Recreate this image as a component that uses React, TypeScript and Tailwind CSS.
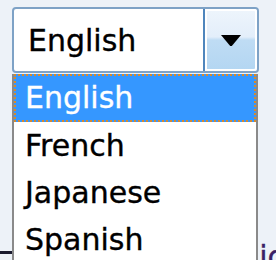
const options = ["English", "French", "Japanese", "Spanish"];

const ArrowIcon = () => (
  <svg width="22" height="13" viewBox="0 0 22 13">
    <path d="M1 1 H21 L11.8 12 H10.2 Z" fill="#000" />
  </svg>
);

export default function App() {
  return (
    <div
      className="relative flex h-[260px] w-[276px] flex-col overflow-hidden bg-[#edf2f8] [-webkit-text-stroke:0.35px_currentColor]"
      style={{ fontFamily: '"DejaVu Sans", Verdana, sans-serif' }}
    >
      <div className="pl-[12px] pt-[7px]">
        <div className="flex h-[66px] w-[247px] rounded-[4px] border-2 border-[#7ea2c6] bg-white">
          <div className="flex flex-1 items-center pl-[14px] text-[30px] text-black">
            English
          </div>
          <div className="flex w-[54px] items-center justify-center rounded-r-[3px] border-l-2 border-[#4f86bd] bg-[linear-gradient(to_bottom,#eef5fc_0%,#e3eefa_45%,#bfdcf4_50%,#b3d6f2_100%)] shadow-[inset_0_0_0_2px_#fff]">
            <ArrowIcon />
          </div>
        </div>
      </div>

      {/* page content under the open list */}
      <div className="flex flex-1 items-end justify-between">
        <div className="mb-[6px] h-[3px] w-[12px] bg-[#1a1a2e]" />
        <div className="mb-[-12px] mr-[-8px] text-[30px] leading-[30px] text-[#3b1f66]">ic</div>
      </div>

      <div className="absolute left-[12px] top-[74px] w-[246px] border-2 border-t-0 border-[#8a8a8a] bg-white">
        {options.map((o, i) => (
          <div
            key={o}
            className={
              i === 0
                ? "h-[48px] border-2 border-dotted border-[#d98a2b] bg-[#3597ff] pl-[9px] text-[30px] leading-[44px] text-white"
                : "h-[47px] pl-[11px] text-[30px] leading-[47px] text-black"
            }
          >
            {o}
          </div>
        ))}
      </div>
    </div>
  );
}
